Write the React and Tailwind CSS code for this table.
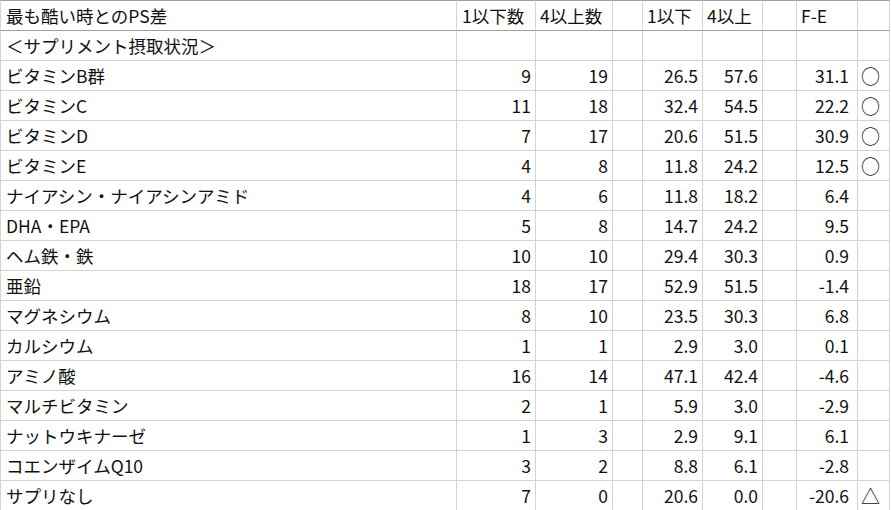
import React from "react";

const rows = [
  ["ビタミンB群", "9", "19", "26.5", "57.6", "31.1", "○"],
  ["ビタミンC", "11", "18", "32.4", "54.5", "22.2", "○"],
  ["ビタミンD", "7", "17", "20.6", "51.5", "30.9", "○"],
  ["ビタミンE", "4", "8", "11.8", "24.2", "12.5", "○"],
  ["ナイアシン・ナイアシンアミド", "4", "6", "11.8", "18.2", "6.4", ""],
  ["DHA・EPA", "5", "8", "14.7", "24.2", "9.5", ""],
  ["ヘム鉄・鉄", "10", "10", "29.4", "30.3", "0.9", ""],
  ["亜鉛", "18", "17", "52.9", "51.5", "-1.4", ""],
  ["マグネシウム", "8", "10", "23.5", "30.3", "6.8", ""],
  ["カルシウム", "1", "1", "2.9", "3.0", "0.1", ""],
  ["アミノ酸", "16", "14", "47.1", "42.4", "-4.6", ""],
  ["マルチビタミン", "2", "1", "5.9", "3.0", "-2.9", ""],
  ["ナットウキナーゼ", "1", "3", "2.9", "9.1", "6.1", ""],
  ["コエンザイムQ10", "3", "2", "8.8", "6.1", "-2.8", ""],
  ["サプリなし", "7", "0", "20.6", "0.0", "-20.6", "△"],
];

const gridCols =
  "grid grid-cols-[456px_79px_77px_30px_60px_60px_34px_61px_33px]";

function Row({ cells, topDark = false, header = false }) {
  const top = topDark ? "border-t-[#9f9f9f]" : "border-t-[#d4d4d4]";
  const base =
    "h-[30px] border-t border-l border-l-[#d4d4d4] flex items-center whitespace-nowrap overflow-hidden " +
    top;
  const [name, a, b, c, d, e, mark] = cells;
  if (header) {
    return (
      <div className={gridCols}>
        <div className={base + " pl-[5px]"}>{name}</div>
        <div className={base + " pl-[5px]"}>{a}</div>
        <div className={base + " pl-[4px]"}>{b}</div>
        <div className={base}></div>
        <div className={base + " pl-[4px]"}>{c}</div>
        <div className={base + " pl-[4px]"}>{d}</div>
        <div className={base}></div>
        <div className={base + " pl-[4px]"}>{e}</div>
        <div className={base + " border-r border-r-[#d4d4d4]"}>{mark}</div>
      </div>
    );
  }
  return (
    <div className={gridCols}>
      <div className={base + " pl-[5px]"}>{name}</div>
      <div className={base + " justify-end pr-[4px]"}>{a}</div>
      <div className={base + " justify-end pr-[4px]"}>{b}</div>
      <div className={base}></div>
      <div className={base + " justify-end pr-[4px]"}>{c}</div>
      <div className={base + " justify-end pr-[4px]"}>{d}</div>
      <div className={base}></div>
      <div className={base + " justify-end pr-[8px]"}>{e}</div>
      <div className={base + " pl-[3px] text-[19px] border-r border-r-[#d4d4d4]"}>{mark}</div>
    </div>
  );
}

export default function App() {
  return (
    <div
      className="w-[891px] h-[510px] overflow-hidden bg-white text-[#111] text-[17.5px] leading-none"
      style={{ fontFamily: '"Noto Sans CJK JP", "Noto Sans", sans-serif' }}
    >
      <Row
        header
        topDark
        cells={["最も酷い時とのPS差", "1以下数", "4以上数", "1以下", "4以上", "F-E", ""]}
      />
      <Row topDark cells={["＜サプリメント摂取状況＞", "", "", "", "", "", ""]} />
      {rows.map((r, i) => (
        <Row key={i} cells={r} />
      ))}
    </div>
  );
}
